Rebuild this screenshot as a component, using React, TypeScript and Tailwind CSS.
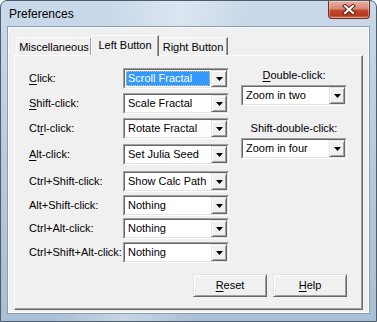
import React from "react";

function U({ children }: { children: React.ReactNode }) {
  return <span className="underline underline-offset-[2px] decoration-[1px]">{children}</span>;
}

function DropBtn() {
  return (
    <div className="flex h-full w-[16px] items-center justify-center border border-t-[#e3e3e3] border-l-[#e3e3e3] border-r-[#696969] border-b-[#696969] bg-[#f0f0f0] shadow-[inset_1px_1px_0_#ffffff,inset_-1px_-1px_0_#a0a0a0]">
      <svg width="7" height="4" viewBox="0 0 7 4">
        <path d="M0 0H7L3.5 4Z" fill="#000" />
      </svg>
    </div>
  );
}

function Combo({ value, selected, mt }: { value: string; selected?: boolean; mt?: string }) {
  return (
    <div className={`flex h-[21px] w-[106px] border border-t-[#a0a0a0] border-l-[#a0a0a0] border-r-white border-b-white ${mt ?? ""}`}>
      <div className="flex flex-1 border border-t-[#696969] border-l-[#696969] border-r-[#e3e3e3] border-b-[#e3e3e3] bg-white">
        <div className="flex flex-1 items-center pl-[1px] pr-[1px]">
          {selected ? (
            <div className="flex h-[15px] flex-1 items-center border border-dotted border-[#d9c98a] bg-[#3399ff] pl-[1px] text-white">
              {value}
            </div>
          ) : (
            <div className="pl-[2px]">{value}</div>
          )}
        </div>
        <DropBtn />
      </div>
    </div>
  );
}

function Row({ label, value, selected, mt }: { label: React.ReactNode; value: string; selected?: boolean; mt: string }) {
  return (
    <div className={`flex items-center ${mt}`}>
      <div className="w-[94px]">{label}</div>
      <Combo value={value} selected={selected} />
    </div>
  );
}

function Btn({ children }: { children: React.ReactNode }) {
  return (
    <div className="flex h-[23px] w-[74px] items-center justify-center border border-t-[#e3e3e3] border-l-[#e3e3e3] border-r-[#696969] border-b-[#696969] bg-[#f0f0f0] shadow-[inset_1px_1px_0_#ffffff,inset_-1px_-1px_0_#a0a0a0]">
      {children}
    </div>
  );
}

export default function App() {
  return (
    <div className="flex h-[322px] w-[377px] flex-col overflow-hidden rounded-t-[7px] border border-[#4d5b6b] bg-[linear-gradient(100deg,transparent_25%,rgba(255,255,255,0.35)_42%,transparent_58%),linear-gradient(to_bottom,#cad9ea,#b3c8de_60%,#a9bfd6)] font-['Liberation_Sans',Arial,sans-serif] text-[11px] text-black">
      {/* title bar */}
      <div className="flex h-[26px] shrink-0 items-start justify-between pl-[8px] pr-[6px]">
        <div className="pt-[6px] text-[12px] leading-[14px] text-black">Preferences</div>
        <div className="flex h-[18px] w-[42px] items-center justify-center rounded-b-[4px] border border-t-0 border-[#6e2b1e] bg-[linear-gradient(to_bottom,#eab1a3,#d88874_45%,#c1492f_55%,#b8371c_85%,#d77a5a)] shadow-[inset_0_0_0_1px_rgba(255,255,255,0.35)]">
          <svg width="14" height="11" viewBox="0 0 14 11">
            <path d="M3 2L11 9M11 2L3 9" stroke="#5a1a0e" strokeWidth="4" strokeLinecap="square" />
            <path d="M3 2L11 9M11 2L3 9" stroke="#ffffff" strokeWidth="2.2" strokeLinecap="square" />
          </svg>
        </div>
      </div>

      {/* client area */}
      <div className="mx-[7px] mb-[8px] flex flex-1 flex-col border border-[#fbfcfd] bg-[#f0f0f0] px-[5px] pb-[2px] pt-[7px] shadow-[0_0_0_1px_#8b9db0]">
        {/* tabs */}
        <div className="relative z-10 -mb-px flex items-end pl-[2px]">
          <div className="mb-[1px] flex h-[18px] w-[76px] items-center justify-center rounded-tl-[2px] border-l border-t border-r border-l-white border-t-white border-r-[#696969] pt-[1px] shadow-[inset_-1px_0_0_#a0a0a0]">
            Miscellaneous
          </div>
          <div className="-ml-px flex h-[21px] w-[68px] items-center justify-center rounded-tl-[2px] border-l border-t border-r border-l-white border-t-white border-r-[#696969] bg-[#f0f0f0] pb-[2px] shadow-[inset_-1px_0_0_#a0a0a0]">
            Left Button
          </div>
          <div className="mb-[1px] flex h-[18px] w-[69px] items-center justify-center border-t border-r border-t-white border-r-[#696969] pt-[1px] shadow-[inset_-1px_0_0_#a0a0a0]">
            Right Button
          </div>
        </div>

        {/* panel */}
        <div className="flex flex-1 flex-col border border-t-white border-l-white border-r-[#696969] border-b-[#696969] bg-[#f0f0f0] shadow-[inset_-1px_-1px_0_#a0a0a0]">
          <div className="flex pl-[14px]">
            <div className="flex flex-col">
              <Row mt="mt-[12px]" label={<><U>C</U>lick:</>} value="Scroll Fractal" selected />
              <Row mt="mt-[4px]" label={<><U>S</U>hift-click:</>} value="Scale Fractal" />
              <Row mt="mt-[4px]" label={<>Ct<U>r</U>l-click:</>} value="Rotate Fractal" />
              <Row mt="mt-[5px]" label={<><U>A</U>lt-click:</>} value="Set Julia Seed" />
              <Row mt="mt-[6px]" label="Ctrl+Shift-click:" value="Show Calc Path" />
              <Row mt="mt-[3px]" label="Alt+Shift-click:" value="Nothing" />
              <Row mt="mt-[2px]" label="Ctrl+Alt-click:" value="Nothing" />
              <Row mt="mt-[3px]" label="Ctrl+Shift+Alt-click:" value="Nothing" />
            </div>
            <div className="ml-[12px] flex w-[106px] flex-col">
              <div className="mt-[13px] h-[13px] text-center leading-[13px]">
                <U>D</U>ouble-click:
              </div>
              <Combo mt="mt-[3px]" value="Zoom in two" />
              <div className="mt-[16px] h-[13px] text-center leading-[13px]">Shift-double-click:</div>
              <Combo mt="mt-[3px]" value="Zoom in four" />
            </div>
          </div>
          <div className="mt-auto flex justify-end gap-[6px] pb-[12px] pr-[15px]">
            <Btn>
              <span>
                <U>R</U>eset
              </span>
            </Btn>
            <Btn>
              <span>
                <U>H</U>elp
              </span>
            </Btn>
          </div>
        </div>
      </div>
    </div>
  );
}
